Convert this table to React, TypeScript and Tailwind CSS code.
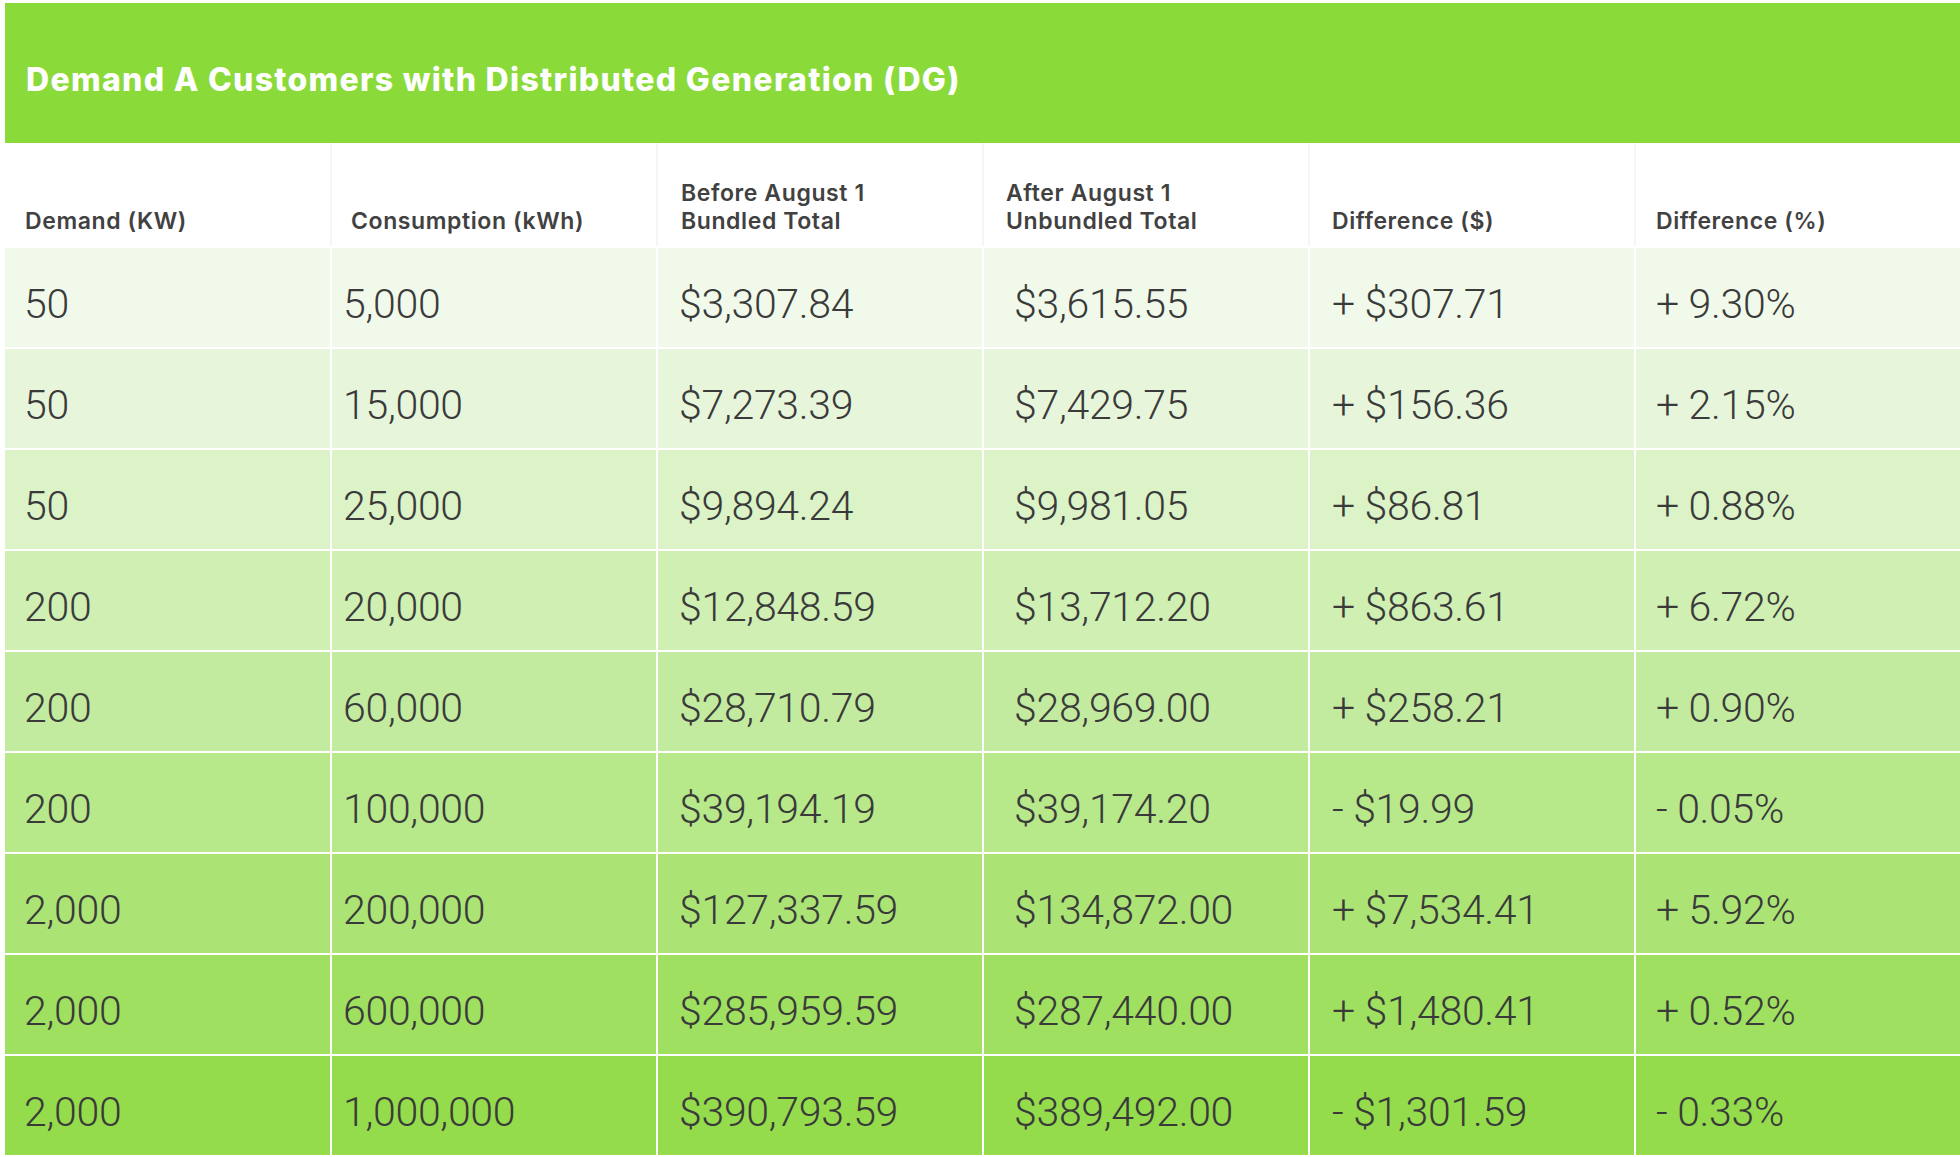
const columns = [
  { label: ["Demand (KW)"], head: "pl-[20px]", cell: "pl-[19px]" },
  { label: ["Consumption (kWh)"], head: "pl-[19px]", cell: "pl-[11px]" },
  { label: ["Before August 1", "Bundled Total"], head: "pl-[23px]", cell: "pl-[21px]" },
  { label: ["After August 1", "Unbundled Total"], head: "pl-[22px]", cell: "pl-[30px]" },
  { label: ["Difference ($)"], head: "pl-[22px]", cell: "pl-[22px]" },
  { label: ["Difference (%)"], head: "pl-[20px]", cell: "pl-[20px]" },
];

const rows = [
  { bg: "bg-[#f1faea]", values: ["50", "5,000", "$3,307.84", "$3,615.55", "+ $307.71", "+ 9.30%"] },
  { bg: "bg-[#e7f6da]", values: ["50", "15,000", "$7,273.39", "$7,429.75", "+ $156.36", "+ 2.15%"] },
  { bg: "bg-[#dbf3c7]", values: ["50", "25,000", "$9,894.24", "$9,981.05", "+ $86.81", "+ 0.88%"] },
  { bg: "bg-[#cfefb3]", values: ["200", "20,000", "$12,848.59", "$13,712.20", "+ $863.61", "+ 6.72%"] },
  { bg: "bg-[#c3eb9f]", values: ["200", "60,000", "$28,710.79", "$28,969.00", "+ $258.21", "+ 0.90%"] },
  { bg: "bg-[#b7e88a]", values: ["200", "100,000", "$39,194.19", "$39,174.20", "- $19.99", "- 0.05%"] },
  { bg: "bg-[#abe475]", values: ["2,000", "200,000", "$127,337.59", "$134,872.00", "+ $7,534.41", "+ 5.92%"] },
  { bg: "bg-[#9fe060]", values: ["2,000", "600,000", "$285,959.59", "$287,440.00", "+ $1,480.41", "+ 0.52%"] },
  { bg: "bg-[#94dc4c]", values: ["2,000", "1,000,000", "$390,793.59", "$389,492.00", "- $1,301.59", "- 0.33%"] },
];

const grid = "grid grid-cols-[325px_326px_326px_326px_326px_326px]";

export default function App() {
  return (
    <div className="min-h-[1157px] w-[1960px] bg-white pl-[5px] pt-[3px] font-['Inter',sans-serif]">
      <div className="flex h-[140px] items-center bg-[#8ada3a] pl-[21px] pt-[13px]">
        <h1 className="text-[32px] font-extrabold tracking-[1.3px] text-white">
          Demand A Customers with Distributed Generation (DG)
        </h1>
      </div>

      <div className={`${grid} h-[103px]`}>
        {columns.map((col, i) => (
          <div
            key={i}
            className={`flex flex-col justify-end pb-[11px] text-[23px] leading-[28px] font-semibold tracking-[0.6px] text-[#414141] ${col.head} ${
              i > 0 ? "border-l-2 border-[#f6f6f6]" : ""
            }`}
          >
            {col.label.map((line) => (
              <span key={line}>{line}</span>
            ))}
          </div>
        ))}
      </div>

      {rows.map((row, r) => (
        <div key={r} className={`${grid} h-[101px] border-t-2 border-white ${row.bg}`}>
          {row.values.map((v, i) => (
            <div
              key={i}
              className={`flex items-center pt-[15px] font-['Roboto',sans-serif] text-[41px] font-light tracking-[-0.3px] text-[#3a3a3a] ${
                columns[i].cell
              } ${i > 0 ? "border-l-2 border-white" : ""}`}
            >
              {v}
            </div>
          ))}
        </div>
      ))}
    </div>
  );
}
